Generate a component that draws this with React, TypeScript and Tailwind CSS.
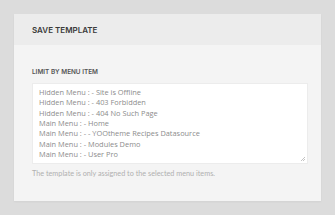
import React from "react";

const items = [
  "Hidden Menu : - Site is Offline",
  "Hidden Menu : - 403 Forbidden",
  "Hidden Menu : - 404 No Such Page",
  "Main Menu : - Home",
  "Main Menu : - - YOOtheme Recipes Datasource",
  "Main Menu : - Modules Demo",
  "Main Menu : - User Pro",
];

export default function App() {
  return (
    <div className="w-[335px] h-[215px] bg-[#dcdcdc] p-[14px]" style={{ fontFamily: '"Open Sans", sans-serif' }}>
      <div className="bg-[#f4f4f4] h-[187px] flex flex-col shadow-[0_1px_2px_rgba(0,0,0,0.05)]">
        <div className="bg-[#ececec] h-[31px] flex items-center px-[18px] pt-[1px]">
          <span className="text-[8px] font-semibold text-[#3a3a3a]" style={{ fontFamily: 'Inter, sans-serif' }}>SAVE TEMPLATE</span>
        </div>
        <div className="pl-[18px] pr-[13px] pt-[22px] flex flex-col">
          <span className="text-[6.4px] font-semibold text-[#555] leading-[10px]" style={{ fontFamily: 'Inter, sans-serif' }}>LIMIT BY MENU ITEM</span>
          <div className="relative mt-[6px] bg-white border border-[#ececec] h-[81px] pl-[6px] pt-[3px]">
            {items.map((t) => (
              <div key={t} className="text-[7.4px] leading-[10.35px] text-[#8c8c8c] whitespace-nowrap">{t}</div>
            ))}
            <svg className="absolute right-[2px] bottom-[2px]" width="5" height="5" viewBox="0 0 5 5">
              <path d="M1 5 L5 1 M3 5 L5 3" stroke="#aaa" strokeWidth="0.7" />
            </svg>
          </div>
          <span className="mt-[4px] text-[7.25px] leading-[12px] text-[#b0b0b0]" style={{ fontFamily: 'Lato, sans-serif' }}>The template is only assigned to the selected menu items.</span>
        </div>
      </div>
    </div>
  );
}
